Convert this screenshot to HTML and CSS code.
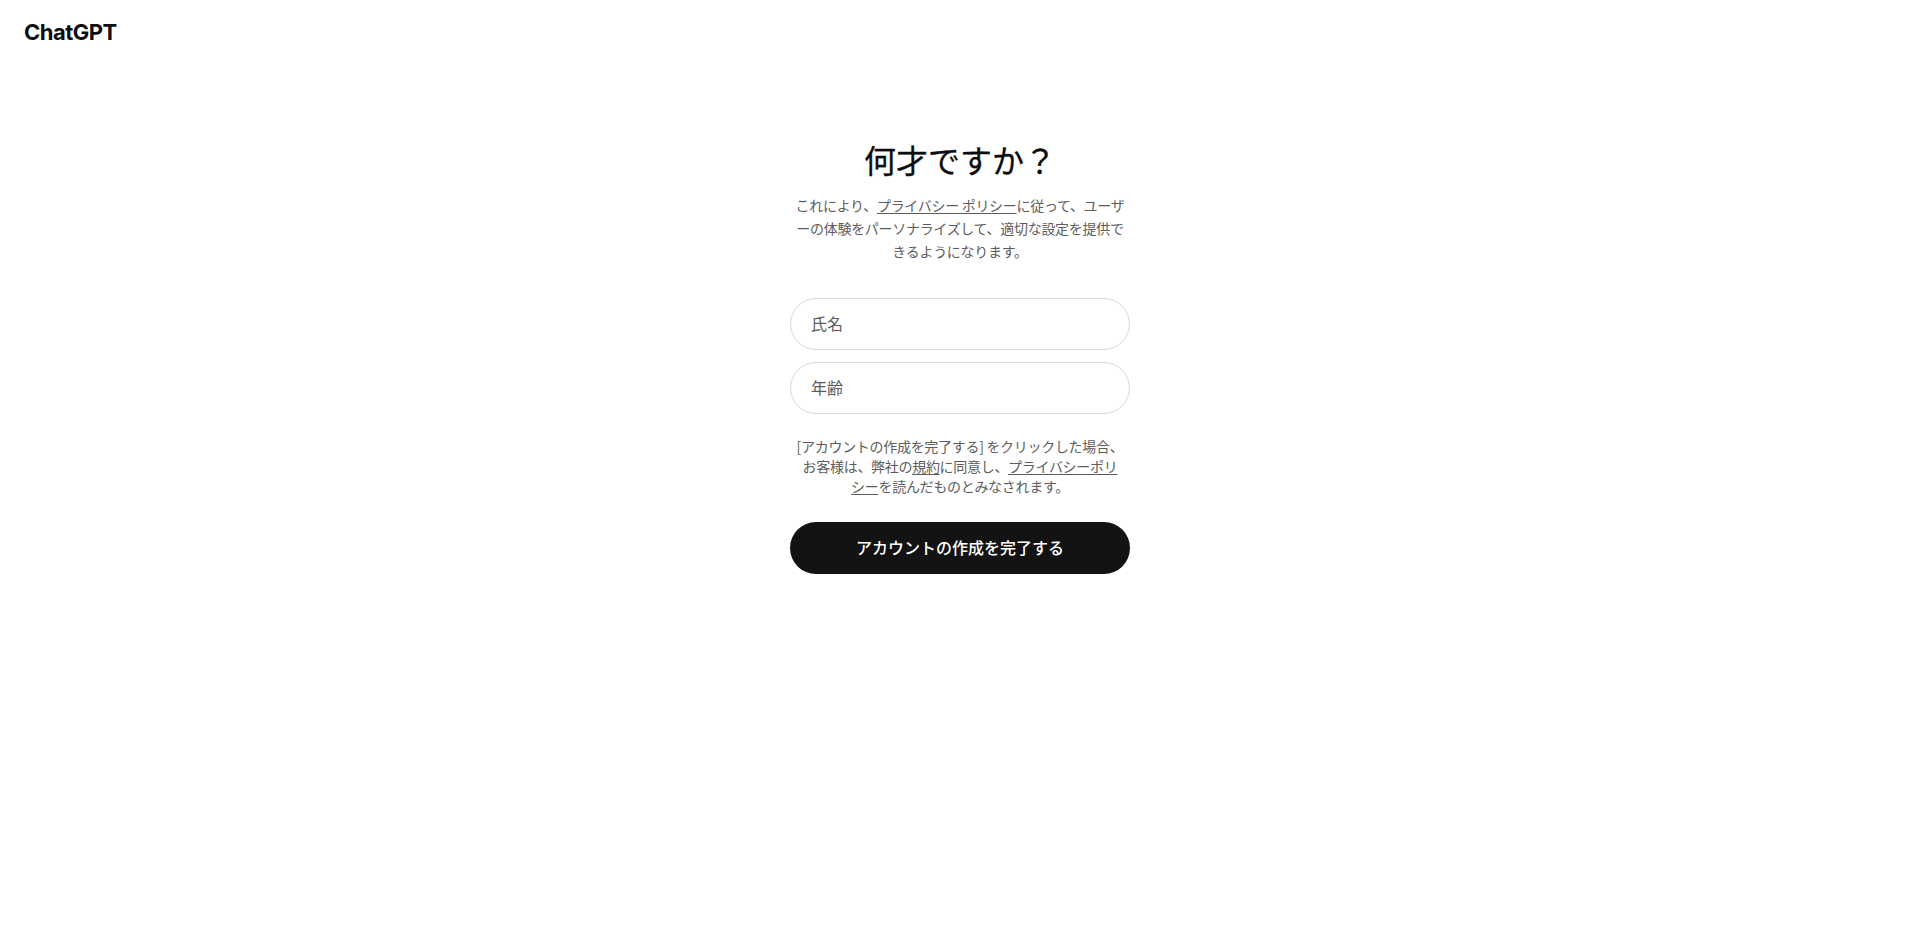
FILE: index.html
```html
<!DOCTYPE html>
<html lang="ja">
<head>
<meta charset="utf-8">
<title>ChatGPT</title>
<link rel="stylesheet" href="styles.css">
</head>
<body>
<header class="header">
  <a class="logo" href="#">ChatGPT</a>
</header>
<main class="main">
  <section class="card">
    <h1 class="title">何才ですか？</h1>
    <p class="desc">これにより、<a class="link" href="#">プライバシー ポリシー</a>に従って、ユーザ<br>ーの体験をパーソナライズして、適切な設定を提供で<br>きるようになります。</p>
    <form class="form">
      <input class="field" type="text" placeholder="氏名">
      <input class="field" type="text" placeholder="年齢">
      <p class="terms">[アカウントの作成を完了する] をクリックした場合、<br>お客様は、弊社の<a class="link" href="#">規約</a>に同意し、<a class="link" href="#">プライバシーポリ<br>シー</a>を読んだものとみなされます。</p>
      <button class="submit" type="button">アカウントの作成を完了する</button>
    </form>
  </section>
</main>
</body>
</html>
```

FILE: styles.css
```css
html, body {
  margin: 0;
  padding: 0;
  background: #ffffff;
}
body {
  font-family: "Noto Sans CJK JP", "Noto Sans", sans-serif;
  color: #0d0d0d;
}
.header {
  padding: 18px 24px 22px;
  height: 28px;
  display: flex;
  align-items: center;
}
.logo {
  font-family: Inter, "Noto Sans", sans-serif;
  font-weight: 700;
  font-size: 22px;
  letter-spacing: -0.5px;
  color: #0d0d0d;
  text-decoration: none;
  line-height: 28px;
}
.main {
  display: flex;
  justify-content: center;
  padding-top: 72px;
}
.card {
  width: 340px;
  display: flex;
  flex-direction: column;
  align-items: center;
}
.title {
  margin: 0;
  font-size: 32px;
  font-weight: 400;
  line-height: 38px;
  color: #0d0d0d;
  -webkit-text-stroke: 0.3px #0d0d0d;
}
.desc {
  margin: 16px 0 0;
  font-size: 14px;
  line-height: 23px;
  letter-spacing: -0.3px;
  color: #5d5d5d;
  text-align: center;
  white-space: nowrap;
}
.link {
  color: #5d5d5d;
  text-decoration: underline;
  text-underline-offset: 2px;
}
.form {
  margin-top: 35px;
  width: 100%;
  display: flex;
  flex-direction: column;
  gap: 12px;
}
.field {
  box-sizing: border-box;
  width: 100%;
  height: 52px;
  padding: 0 20px 2px;
  border: 1px solid #d9d9d9;
  border-radius: 26px;
  font-family: "Noto Sans CJK JP", sans-serif;
  font-size: 16px;
  color: #0d0d0d;
  background: #ffffff;
  outline: none;
}
.field::placeholder {
  color: #5d5d5d;
}
.terms {
  margin: 10px 0 14px;
  font-size: 14px;
  line-height: 20px;
  letter-spacing: -0.3px;
  color: #5d5d5d;
  text-align: center;
  white-space: nowrap;
}
.submit {
  box-sizing: border-box;
  width: 100%;
  height: 52px;
  padding: 0 0 2px;
  border: none;
  border-radius: 26px;
  background: #131313;
  color: #ffffff;
  font-family: "Noto Sans CJK JP", sans-serif;
  font-size: 16px;
  font-weight: 500;
  cursor: pointer;
}
```
